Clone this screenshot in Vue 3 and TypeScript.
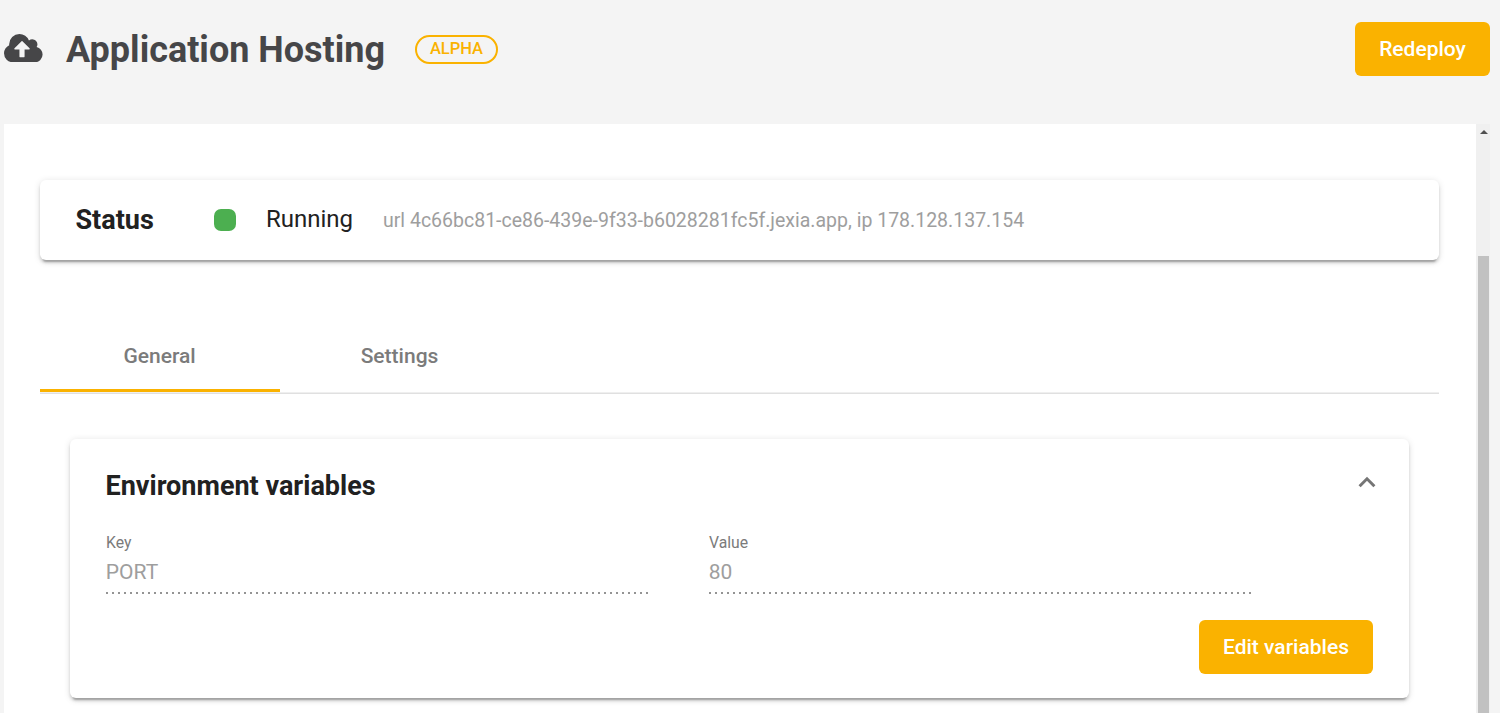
<script setup lang="ts">
import { ref } from 'vue'

interface Variable {
  key: string
  value: string
}

const tabs: string[] = ['General', 'Settings']
const activeTab = ref('General')
const variables: Variable[] = [{ key: 'PORT', value: '80' }]
</script>

<template>
  <div class="page">
    <header class="header">
      <svg class="cloud" viewBox="0 0 1920 1408">
        <path
          fill="#464648"
          d="M1280 736q0-14-9-23l-352-352q-9-9-23-9t-23 9l-351 351q-10 12-10 24 0 14 9 23t23 9h224v352q0 13 9.5 22.5t22.5 9.5h192q13 0 22.5-9.5t9.5-22.5v-352h224q13 0 22.5-9.5t9.5-22.5zM1920 1024q0 159-112.5 271.5t-271.5 112.5h-1088q-185 0-316.5-131.5t-131.5-316.5q0-130 70-240t188-165q-2-30-2-43 0-212 150-362t362-150q156 0 285.5 87t188.5 231q71-62 166-62 106 0 181 75t75 181q0 76-41 138 130 31 213.5 135.5t83.5 238.5z"
        />
      </svg>
      <h1 class="title">Application Hosting</h1>
      <span class="badge">ALPHA</span>
      <button class="btn redeploy">Redeploy</button>
    </header>

    <div class="body">
      <main class="content">
        <section class="card status">
          <h2 class="heading status-title">Status</h2>
          <span class="dot"></span>
          <span class="state">Running</span>
          <span class="url">url 4c66bc81-ce86-439e-9f33-b6028281fc5f.jexia.app, ip 178.128.137.154</span>
        </section>

        <nav class="tabs">
          <a
            v-for="tab in tabs"
            :key="tab"
            class="tab"
            :class="{ active: tab === activeTab }"
            @click="activeTab = tab"
          >{{ tab }}</a>
        </nav>

        <section class="card env">
          <div class="env-head">
            <h2 class="heading">Environment variables</h2>
            <svg class="chevron" viewBox="0 0 18 12" width="18" height="12">
              <path d="M1.6 10.2L9 2.8L16.4 10.2" fill="none" stroke="#757575" stroke-width="3" />
            </svg>
          </div>
          <div v-for="item in variables" :key="item.key" class="row">
            <div class="field">
              <span class="label">Key</span>
              <span class="value">{{ item.key }}</span>
              <span class="underline"></span>
            </div>
            <div class="field">
              <span class="label">Value</span>
              <span class="value">{{ item.value }}</span>
              <span class="underline"></span>
            </div>
          </div>
          <button class="btn edit">Edit variables</button>
        </section>
      </main>
      <div class="scrollbar">
        <span class="arrow"></span>
        <span class="thumb"></span>
      </div>
    </div>
  </div>
</template>

<style>
body {
  margin: 0;
  background: #f4f4f4;
}
</style>

<style scoped>
.page {
  box-sizing: border-box;
  height: 713px;
  padding: 0 10px 0 4px;
  display: flex;
  flex-direction: column;
  overflow: hidden;
  background: #f4f4f4;
  font-family: Roboto, 'Liberation Sans', sans-serif;
  color: #212121;
}
.header {
  flex: none;
  height: 124px;
  display: flex;
  align-items: flex-start;
}
.cloud {
  flex: none;
  width: 38.6px;
  height: 28.3px;
  margin-top: 33.8px;
}
.title {
  margin: 29px 0 0 23.4px;
  width: 349px;
  font-size: 36px;
  line-height: 42px;
  font-weight: 700;
  color: #464648;
  white-space: nowrap;
}
.badge {
  box-sizing: border-box;
  width: 83px;
  height: 29px;
  margin-top: 35px;
  border: 2px solid #fab200;
  border-radius: 15px;
  font-size: 16.5px;
  line-height: 24px;
  font-weight: 500;
  text-align: center;
  color: #fab200;
}
.btn {
  height: 54px;
  padding: 0;
  border: 0;
  border-radius: 6px;
  background: #fab200;
  color: #fff;
  font: 500 21px/54px Roboto, 'Liberation Sans', sans-serif;
  white-space: nowrap;
}
.redeploy {
  width: 135px;
  margin: 22px 0 0 auto;
}
.body {
  flex: 1;
  min-height: 0;
  display: flex;
}
.content {
  flex: 1;
  padding: 56px 37px 0 36px;
  background: #fff;
}
.card {
  box-sizing: border-box;
  border-radius: 6px;
  background: #fff;
  box-shadow:
    0 4.5px 1.5px -3px rgba(0, 0, 0, 0.2),
    0 3px 3px rgba(0, 0, 0, 0.14),
    0 1.5px 7.5px rgba(0, 0, 0, 0.12);
}
.status {
  height: 80px;
  padding: 0 36px 0 35.5px;
  display: flex;
  align-items: center;
}
.heading {
  margin: 0;
  font-size: 27px;
  line-height: 36px;
  font-weight: 700;
  white-space: nowrap;
}
.status-title {
  width: 138.5px;
}
.dot {
  width: 22px;
  height: 22px;
  border-radius: 7px;
  background: #4caf50;
}
.state {
  width: 117px;
  margin: 0 0 2px 30px;
  font-size: 24px;
  line-height: 30px;
}
.url {
  margin-top: 1px;
  font-size: 19.5px;
  line-height: 30px;
  color: #9e9e9e;
  white-space: nowrap;
}
.tabs {
  height: 72px;
  margin-top: 60px;
  display: flex;
  border-bottom: 1px solid #efefef;
  box-shadow: 0 1px 0 #e0e0e0;
}
.tab {
  box-sizing: border-box;
  width: 240px;
  height: 72px;
  padding-right: 1px;
  border-bottom: 3px solid transparent;
  font-size: 21px;
  line-height: 72px;
  font-weight: 500;
  text-align: center;
  color: #7b7b7b;
}
.tab.active {
  border-bottom-color: #fab200;
}
.env {
  height: 259px;
  margin: 46px 30px 0;
  padding: 29px 36px 24px;
  display: flex;
  flex-direction: column;
}
.env-head {
  display: flex;
  justify-content: space-between;
  margin-left: -0.5px;
}
.chevron {
  margin: 8px -3px 0 0;
}
.row {
  display: flex;
  gap: 60px;
  margin-top: 29px;
}
.field {
  width: 543px;
  display: flex;
  flex-direction: column;
}
.label {
  font-size: 15.75px;
  line-height: 20px;
  color: #7b7b7b;
}
.value {
  margin: 4px 0 0 -0.2px;
  font-size: 21px;
  line-height: 30px;
  color: #9e9e9e;
}
.underline {
  height: 2px;
  margin-top: 5px;
  background: repeating-linear-gradient(to right, #949494 0 2px, transparent 2px 6px);
}
.edit {
  width: 174px;
  margin-top: auto;
  align-self: flex-end;
}
.scrollbar {
  width: 14px;
  display: flex;
  flex-direction: column;
  align-items: center;
  background: #f0f0f0;
}
.arrow {
  margin: 6px 0 0 1px;
  border: 4px solid transparent;
  border-top: 0;
  border-bottom-color: #505050;
}
.thumb {
  width: 11px;
  margin-top: 122px;
  flex: 1;
  background: #c1c1c1;
}
</style>
